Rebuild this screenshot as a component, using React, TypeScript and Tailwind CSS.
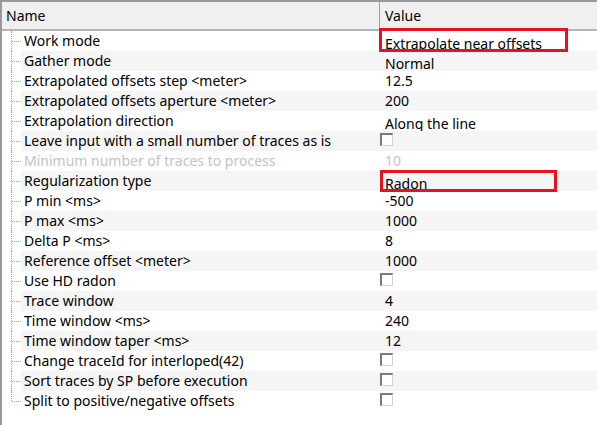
import React from 'react';

type Row = {
  name: string;
  value?: string;
  kind?: 'text' | 'combo' | 'check';
  disabled?: boolean;
  marked?: 'wide' | 'narrow';
};

const rows: Row[] = [
  { name: 'Work mode', value: 'Extrapolate near offsets', kind: 'combo', marked: 'wide' },
  { name: 'Gather mode', value: 'Normal', kind: 'combo' },
  { name: 'Extrapolated offsets step <meter>', value: '12.5' },
  { name: 'Extrapolated offsets aperture <meter>', value: '200' },
  { name: 'Extrapolation direction', value: 'Along the line', kind: 'combo' },
  { name: 'Leave input with a small number of traces as is', kind: 'check' },
  { name: 'Minimum number of traces to process', value: '10', disabled: true },
  { name: 'Regularization type', value: 'Radon', kind: 'combo', marked: 'narrow' },
  { name: 'P min <ms>', value: '-500' },
  { name: 'P max <ms>', value: '1000' },
  { name: 'Delta P <ms>', value: '8' },
  { name: 'Reference offset <meter>', value: '1000' },
  { name: 'Use HD radon', kind: 'check' },
  { name: 'Trace window', value: '4' },
  { name: 'Time window <ms>', value: '240' },
  { name: 'Time window taper <ms>', value: '12' },
  { name: 'Change traceId for interloped(42)', kind: 'check' },
  { name: 'Sort traces by SP before execution', kind: 'check' },
  { name: 'Split to positive/negative offsets', kind: 'check' },
];

const Checkbox = () => (
  <div className="mt-[2px] w-[13px] h-[13px] bg-white border-t-2 border-l-2 border-r border-b border-t-[#7a7a7a] border-l-[#7a7a7a] border-r-[#d0d0d0] border-b-[#d0d0d0]" />
);

const PropertyRow = ({ row, index, last }: { row: Row; index: number; last: boolean }) => {
  const striped = index % 2 === 1;
  const textColor = row.disabled ? 'text-[#c3c3c3]' : 'text-[#000000]';
  return (
    <div className="flex h-[20px]">
      {/* tree gutter */}
      <div className="relative w-[19px] shrink-0">
        <div
          className={`absolute left-[9px] top-0 border-l border-dotted border-[#a0a0a0] ${last ? 'h-[10px]' : 'h-[20px]'}`}
        />
        <div className="absolute left-[10px] top-[10px] w-[9px] border-t border-dotted border-[#a0a0a0]" />
      </div>
      <div className={`flex flex-1 ${striped ? 'bg-[#f5f5f5]' : 'bg-white'}`}>
        <div className={`w-[359px] shrink-0 pl-[3px] leading-[20px] whitespace-nowrap overflow-hidden ${textColor}`}>
          {row.name}
        </div>
        <div className="relative flex-1">
          {row.kind === 'check' ? (
            <Checkbox />
          ) : (
            <div
              className={`h-[20px] overflow-hidden pl-[5px] whitespace-nowrap ${textColor} ${
                row.kind === 'combo' ? 'pt-[3px] leading-[20px]' : 'leading-[20px]'
              }`}
            >
              {row.value}
            </div>
          )}
          {row.marked === 'wide' && (
            <div className="absolute left-[-1px] top-[-3px] w-[189px] h-[24px] border-[3px] border-[#e81123]" />
          )}
          {row.marked === 'narrow' && (
            <div className="absolute left-0 top-[-1px] w-[177px] h-[22px] border-[3px] border-[#e81123]" />
          )}
        </div>
      </div>
    </div>
  );
};

export default function App() {
  return (
    <div
      className="w-[597px] h-[425px] overflow-hidden bg-white border-t-2 border-l-2 border-[#9a9a9a] text-[14px]"
      style={{ fontFamily: '"Noto Sans", "Open Sans", sans-serif' }}
    >
      <div className="flex h-[29px] bg-[#f0f0f0] border-b-2 border-[#b4b4b4] text-[#000000]">
        <div className="w-[378px] shrink-0 pl-[4px] leading-[27px] border-r border-[#a0a0a0]">Name</div>
        <div className="flex-1 pl-[5px] leading-[27px]">Value</div>
      </div>
      <div className="flex flex-col">
        {rows.map((row, i) => (
          <PropertyRow key={row.name} row={row} index={i} last={i === rows.length - 1} />
        ))}
      </div>
    </div>
  );
}
